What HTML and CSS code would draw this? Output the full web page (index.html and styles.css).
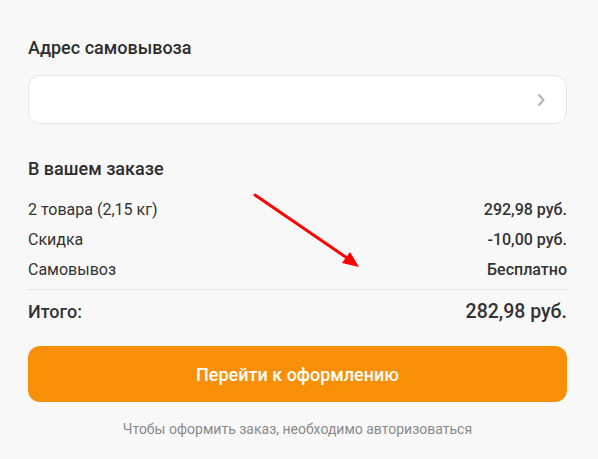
FILE: index.html
```html
<!DOCTYPE html>
<html lang="ru">
  <head>
    <meta charset="UTF-8" />
    <meta name="viewport" content="width=device-width, initial-scale=1.0" />
    <title>Корзина</title>
    <link rel="stylesheet" href="styles.css">
  </head>
  <body>
    <div class="checkout">
      <h2 class="title">Адрес самовывоза</h2>
      <div class="address-select">
        <svg class="chevron" width="10" height="14" viewBox="0 0 10 14">
          <path d="M2.5 1.5 L7.5 7 L2.5 12.5" fill="none" stroke="#b3b3b3" stroke-width="2" />
        </svg>
      </div>

      <h2 class="title title-order">В вашем заказе</h2>
      <div class="summary">
        <div class="row">
          <span>2 товара (2,15 кг)</span>
          <span class="value">292,98 руб.</span>
        </div>
        <div class="row">
          <span>Скидка</span>
          <span class="value">-10,00 руб.</span>
        </div>
        <div class="row">
          <span>Самовывоз</span>
          <span class="value">Бесплатно</span>
        </div>
      </div>
      <div class="total">
        <span>Итого:</span>
        <span class="total-value">282,98 руб.</span>
      </div>

      <button class="btn">Перейти к оформлению</button>
      <p class="hint">Чтобы оформить заказ, необходимо авторизоваться</p>
    </div>

    <!-- стрелка-пометка поверх скриншота -->
    <svg class="pointer" width="120" height="85" viewBox="0 0 120 85">
      <line x1="5" y1="5" x2="100" y2="70" stroke="#ff0000" stroke-width="3" stroke-linecap="round" />
      <polygon points="109,77 92,73 100,62" fill="#ff0000" />
    </svg>
  </body>
</html>
```

FILE: styles.css
```css
body {
  margin: 0;
  padding: 0;
  background-color: #f8f8f8;
  font-family: "Roboto", "Liberation Sans", sans-serif;
  color: #333333;
  position: relative;
}

.checkout {
  width: 539px;
  margin-left: 28px;
  padding-top: 36px;
}

.title {
  margin: 0;
  font-size: 18px;
  line-height: 24px;
  font-weight: 500;
  color: #2e2e2e;
}

.address-select {
  margin-top: 15px;
  height: 47px;
  background-color: #ffffff;
  border: 1px solid #e6e6e6;
  border-radius: 12px;
  display: flex;
  align-items: center;
  justify-content: flex-end;
  padding-right: 20px;
}

.chevron {
  display: block;
}

.title-order {
  margin-top: 33px;
}

.summary {
  margin-top: 14px;
  padding-bottom: 4px;
  border-bottom: 1px solid #e3e3e3;
}

.row {
  display: flex;
  justify-content: space-between;
  font-size: 16px;
  line-height: 30px;
}

.value {
  font-weight: 500;
}

.total {
  display: flex;
  justify-content: space-between;
  align-items: center;
  height: 42px;
  font-size: 18px;
  font-weight: 500;
}

.total-value {
  font-size: 19.5px;
}

.btn {
  display: block;
  width: 100%;
  height: 56px;
  margin-top: 14px;
  border: none;
  border-radius: 12px;
  background-color: #f98f06;
  color: #ffffff;
  font-family: inherit;
  font-size: 18px;
  font-weight: 500;
  cursor: pointer;
}

.hint {
  margin: 18px 0 0;
  text-align: center;
  font-size: 14px;
  line-height: 18px;
  color: #8a8a8a;
}

.pointer {
  position: absolute;
  left: 250px;
  top: 190px;
}
```
